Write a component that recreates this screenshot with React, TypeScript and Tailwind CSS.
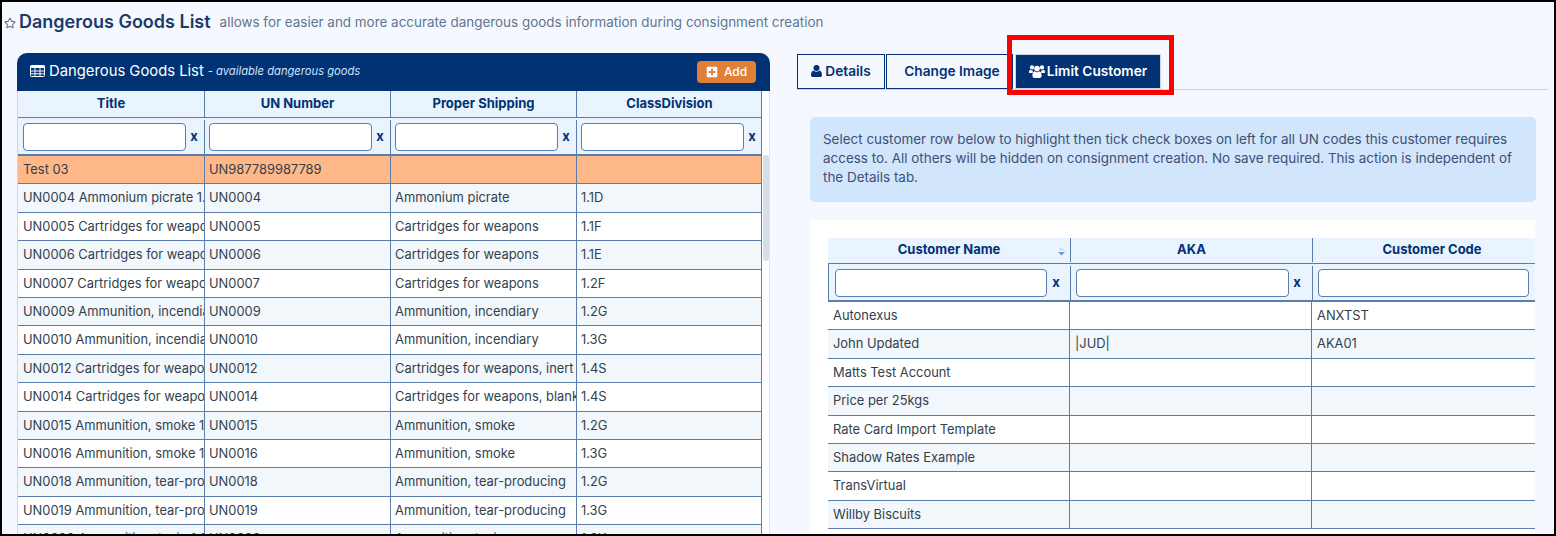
import { FaPlusSquare, FaRegStar } from 'react-icons/fa';

const goods = [
  ['UN0004 Ammonium picrate 1.1D', 'UN0004', 'Ammonium picrate', '1.1D'],
  ['UN0005 Cartridges for weapons 1.1F', 'UN0005', 'Cartridges for weapons', '1.1F'],
  ['UN0006 Cartridges for weapons 1.1E', 'UN0006', 'Cartridges for weapons', '1.1E'],
  ['UN0007 Cartridges for weapons 1.2F', 'UN0007', 'Cartridges for weapons', '1.2F'],
  ['UN0009 Ammunition, incendiary 1.2G', 'UN0009', 'Ammunition, incendiary', '1.2G'],
  ['UN0010 Ammunition, incendiary 1.3G', 'UN0010', 'Ammunition, incendiary', '1.3G'],
  ['UN0012 Cartridges for weapons, inert', 'UN0012', 'Cartridges for weapons, inert', '1.4S'],
  ['UN0014 Cartridges for weapons, blank', 'UN0014', 'Cartridges for weapons, blank', '1.4S'],
  ['UN0015 Ammunition, smoke 1.2G', 'UN0015', 'Ammunition, smoke', '1.2G'],
  ['UN0016 Ammunition, smoke 1.3G', 'UN0016', 'Ammunition, smoke', '1.3G'],
  ['UN0018 Ammunition, tear-producing', 'UN0018', 'Ammunition, tear-producing', '1.2G'],
  ['UN0019 Ammunition, tear-producing', 'UN0019', 'Ammunition, tear-producing', '1.3G'],
  ['UN0020 Ammunition, toxic 1.2K', 'UN0020', 'Ammunition, toxic', '1.2K'],
];

const customers = [
  ['Autonexus', '', 'ANXTST'],
  ['John Updated', '|JUD|', 'AKA01'],
  ['Matts Test Account', '', ''],
  ['Price per 25kgs', '', ''],
  ['Rate Card Import Template', '', ''],
  ['Shadow Rates Example', '', ''],
  ['TransVirtual', '', ''],
  ['Willby Biscuits', '', ''],
];

function TableIcon() {
  return (
    <svg className="mr-1 shrink-0" width="15" height="12" viewBox="0 0 15 12" fill="none">
      <rect x="0.5" y="0.5" width="14" height="11" rx="1" stroke="#ffffff" />
      <rect x="0.5" y="0.5" width="14" height="2.5" fill="#ffffff" />
      <path d="M5 3v8.5M10 3v8.5M0.5 6h14M0.5 8.8h14" stroke="#f2f6fc" />
    </svg>
  );
}

function UserIcon() {
  return (
    <svg className="shrink-0" width="11" height="12" viewBox="0 0 11 12" fill="#003274">
      <circle cx="5.5" cy="3" r="3" />
      <path d="M0 10.2C0 7.8 1 6 2.6 5.6 3.4 6.4 4.4 6.8 5.5 6.8s2.1-.4 2.9-1.2C10 6 11 7.8 11 10.2 11 11.3 10.2 12 9.2 12H1.8C.8 12 0 11.3 0 10.2Z" />
    </svg>
  );
}

function UsersIcon() {
  return (
    <svg className="shrink-0" width="16" height="13" viewBox="0 0 16 13" fill="#ffffff">
      <circle cx="3" cy="2.4" r="2.1" />
      <circle cx="13" cy="2.4" r="2.1" />
      <circle cx="8" cy="3.6" r="2.8" />
      <path d="M0 7.4C0 5.8.6 5 1.4 4.8 2 5.3 2.6 5.5 3.4 5.5L3.9 5.4C3.6 6.3 3.6 7 3.8 8H1C.4 8 0 7.8 0 7.4ZM16 7.4C16 5.8 15.4 5 14.6 4.8 14 5.3 13.4 5.5 12.6 5.5L12.1 5.4C12.4 6.3 12.4 7 12.2 8H15C15.6 8 16 7.8 16 7.4Z" />
      <path d="M3.4 10.8C3.4 8.4 4.2 6.6 5.4 6.2 6.1 6.9 7 7.3 8 7.3S9.9 6.9 10.6 6.2C11.8 6.6 12.6 8.4 12.6 10.8 12.6 12 11.8 13 10.7 13H5.3C4.2 13 3.4 12 3.4 10.8Z" />
    </svg>
  );
}

function FilterCell({ width, inputWidth, pad, clearWidth, last = false }: { width: string; inputWidth: string; pad: string; clearWidth?: string; last?: boolean }) {
  return (
    <div className={`${width} ${pad} flex shrink-0 items-center ${last ? '' : 'border-r border-[#5a7dab]'}`}>
      <div className={`${inputWidth} h-7 shrink-0 rounded-[4px] border border-[#5a7dab] bg-white`} />
      {clearWidth && <span className={`${clearWidth} shrink-0 text-center text-[13px] font-bold text-[#003274]`}>x</span>}
    </div>
  );
}

function Cell({ width, text, pad = 'pl-[5px]', last = false }: { width: string; text: string; pad?: string; last?: boolean }) {
  return (
    <div className={`${width} ${pad} flex shrink-0 items-center overflow-hidden whitespace-nowrap ${last ? '' : 'border-r border-[#5a7dab]'}`}>
      {text}
    </div>
  );
}

function HeadCell({ width, text, last = false }: { width: string; text: string; last?: boolean }) {
  return (
    <div className={`${width} flex shrink-0 items-center justify-center font-bold text-[#003274] ${last ? '' : 'border-r border-[#5a7dab]'}`}>
      {text}
    </div>
  );
}

function GoodsPanel() {
  const widths = ['w-[187px]', 'w-[186px]', 'w-[186px]', 'w-[185px]'];
  const pads = ['pl-[5px]', 'pl-[4px]', 'pl-[4px]', 'pl-[4px]'];
  return (
    <div className="w-[753px] shrink-0">
      <div className="flex h-[38px] items-center justify-between rounded-t-[10px] bg-[#003274] pl-[13px] pr-[14px] text-white">
        <div className="flex items-center pb-[2px]">
          <TableIcon />
          <span className="text-[14.8px] leading-none">Dangerous Goods List</span>
          <span className="ml-1 text-[11.2px] italic text-[#cfe2fa]">- available dangerous goods</span>
        </div>
        <div className="flex h-[22px] w-[59px] items-center justify-center gap-[6px] rounded-[4px] bg-[#e07f38] text-xs font-medium">
          <FaPlusSquare className="text-[12px]" />
          Add
        </div>
      </div>
      <div className="flex h-[443px]">
        <div className="w-[745px] border-x border-[#5a7dab] border-l-[#c9d6e6] text-[12.9px] text-[#333f4d]">
          <div className="flex h-[27px] border-b border-[#5a7dab] bg-[#eaf4fe] text-[13px]">
            {['Title', 'UN Number', 'Proper Shipping', 'ClassDivision'].map((title, i) => (
              <HeadCell key={title} width={widths[i]} text={title} last={i === 3} />
            ))}
          </div>
          <div className="flex h-[38px] border-b-2 border-[#5a7dab] bg-[#eaf4fe] pt-[2px]">
            {widths.map((width, i) => (
              <FilterCell key={width + i} width={width} pad={pads[i]} inputWidth="w-[163px]" clearWidth="w-4" last={i === 3} />
            ))}
          </div>
          <div className="flex h-[28.4px] border-b border-[#5a7dab] bg-[#ffb888]">
            <Cell width={widths[0]} pad={pads[0]} text="Test 03" />
            <Cell width={widths[1]} pad={pads[1]} text="UN987789987789" />
            <Cell width={widths[2]} pad={pads[2]} text="" />
            <Cell width={widths[3]} pad={pads[3]} text="" last />
          </div>
          {goods.map((row, index) => (
            <div key={row[1]} className={`flex h-[28.4px] border-b border-[#5a7dab] ${index % 2 === 0 ? 'bg-[#f2f7fc]' : 'bg-white'}`}>
              {row.map((text, i) => (
                <Cell key={i} width={widths[i]} pad={pads[i]} text={text} last={i === 3} />
              ))}
            </div>
          ))}
        </div>
        <div className="w-2 border-r border-[#dde5ee] bg-white pl-px pt-[64px]">
          <div className="h-[106px] w-[6px] rounded-[3px] bg-[#d6dfe8]" />
        </div>
      </div>
    </div>
  );
}

function CustomerTable() {
  const bodyWidths = ['w-[242px]', 'w-[242px]', 'w-[238px]'];
  return (
    <div className="mt-[18px] h-[400px] w-[725px] overflow-hidden bg-white pl-[18px] pt-[18px] text-[12.9px] text-[#333f4d]">
      <div className="flex h-[25px] w-[740px] bg-[#eaf4fe] pb-px text-[13px]">
        <div className="relative flex w-[243px] shrink-0 items-center justify-center border-r border-[#5a7dab] font-bold text-[#003274]">
          Customer Name
          <svg className="absolute right-[5px] top-[9px]" width="7" height="9" viewBox="0 0 7 9">
            <path d="M0 3.5 L3.5 0 L7 3.5 Z" fill="#cfe0f5" />
            <path d="M0 5 L3.5 8.5 L7 5 Z" fill="#6f9ad8" />
          </svg>
        </div>
        <HeadCell width="w-[242px]" text="AKA" />
        <HeadCell width="w-[238px]" text="Customer Code" last />
      </div>
      <div className="flex h-[39px] w-[740px] border-y border-b-2 border-l border-[#5a7dab] bg-[#eaf4fe] pt-[2px]">
        <FilterCell width="w-[242px]" pad="pl-[6px]" inputWidth="w-[212px]" clearWidth="w-[18px]" />
        <FilterCell width="w-[242px]" pad="pl-[5px]" inputWidth="w-[213px]" clearWidth="w-4" />
        <FilterCell width="w-[238px]" pad="pl-[5px]" inputWidth="w-[211px]" last />
      </div>
      {customers.map((row, index) => (
        <div key={row[0]} className={`flex h-[28.4px] w-[740px] border-b border-[#5a7dab] ${index % 2 === 1 ? 'bg-[#f2f7fc]' : 'bg-white'}`}>
          {row.map((text, i) => (
            <Cell key={i} width={bodyWidths[i]} text={text} last={i === 2} />
          ))}
        </div>
      ))}
    </div>
  );
}

function DetailPanel() {
  return (
    <div className="ml-[27px] min-w-0 flex-1 pt-px">
      <div className="relative flex h-[36px] border-b border-[#c9d6e6] text-[13.7px] font-semibold">
        <div className="flex h-[35px] w-[88px] items-center justify-center gap-[3px] border border-[#003274] pb-px text-[#003274]">
          <UserIcon />
          Details
        </div>
        <div className="ml-px flex h-[35px] w-[127px] items-center justify-center border border-[#003274] pb-px pl-[5px] text-[#003274]">
          Change Image
        </div>
        <div className="ml-[2px] flex h-[35px] w-[146px] items-center justify-center gap-[2px] border border-[#c9d6e6] bg-[#003274] pb-px text-white">
          <UsersIcon />
          Limit Customer
        </div>
        <div className="absolute left-[210px] top-[-19px] h-[60px] w-[167px] border-[5px] border-[#ff0000]" />
      </div>
      <div className="ml-[13px] mt-[27px]">
        <div className="h-[85px] w-[726px] rounded-[5px] bg-[#d1e5fb] px-[13px] py-[13px] text-[13.45px] leading-[19px] text-[#3c5078]">
          Select customer row below to highlight then tick check boxes on left for all UN codes this customer requires access to. All others will be hidden on consignment creation. No save required. This action is independent of the Details tab.
        </div>
        <CustomerTable />
      </div>
    </div>
  );
}

export default function App() {
  return (
    <div className="h-[536px] w-[1556px] overflow-hidden border-2 border-black bg-[#f5f9ff] font-['Inter',sans-serif]">
      <div className="flex h-[40px] items-center pl-[2px]">
        <FaRegStar className="mt-[2px] text-[12px] text-[#5d6b80]" />
        <h1 className="ml-[3px] text-lg font-semibold leading-none text-[#1b3a6b]">Dangerous Goods List</h1>
        <span className="ml-[9px] mt-px text-[13.45px] text-[#5f7590]">allows for easier and more accurate dangerous goods information during consignment creation</span>
      </div>
      <div className="flex pl-[15px] pr-[6px] pt-[11px]">
        <GoodsPanel />
        <DetailPanel />
      </div>
    </div>
  );
}
